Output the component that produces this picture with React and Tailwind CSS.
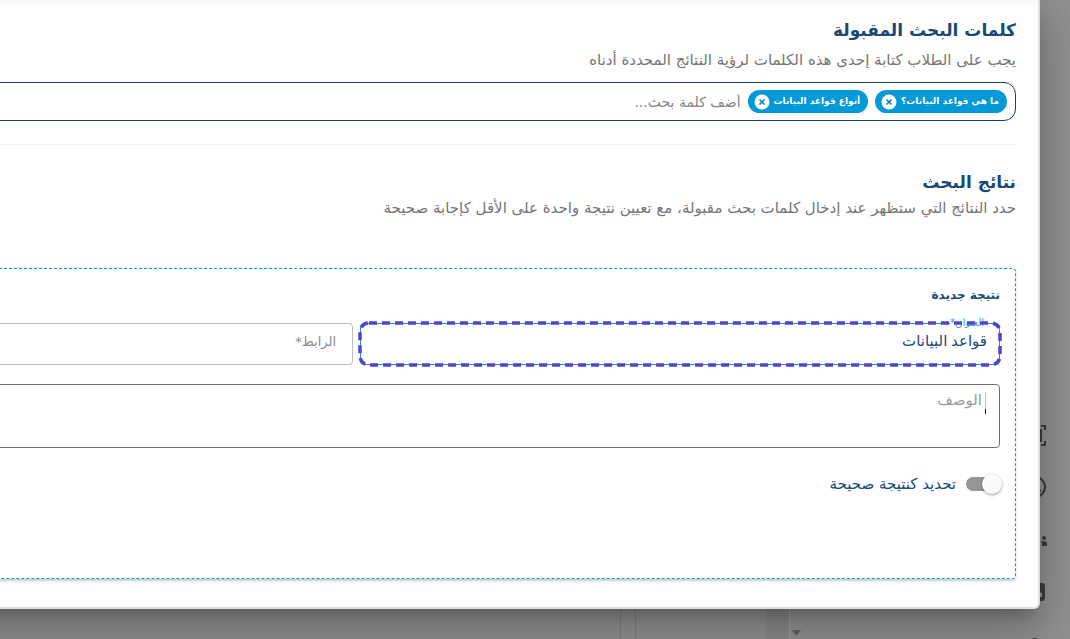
import React, { useState } from "react";

const KEYWORDS = ["ما هي قواعد البيانات؟", "أنواع قواعد البيانات"];

const ScanIcon = () => (
  <svg className="w-6 h-6 shrink-0" viewBox="0 0 24 24" fill="none" stroke="currentColor" strokeWidth="2">
    <path d="M2 7V3h5M18 3h4v4M22 18v4h-4M7 22H2v-4" />
    <rect x="5" y="6" width="14" height="13" rx="1" fill="currentColor" stroke="none" />
  </svg>
);

const CircleIcon = () => (
  <svg className="w-6 h-6 shrink-0" viewBox="0 0 24 24" fill="none" stroke="currentColor" strokeWidth="2">
    <circle cx="12" cy="12" r="10" />
    <path d="M12 6v7l6 3" />
  </svg>
);

const PeopleIcon = () => (
  <svg className="w-6 h-6 shrink-0" viewBox="0 0 24 24" fill="currentColor">
    <circle cx="12" cy="9" r="3" />
    <circle cx="4" cy="11" r="2" />
    <circle cx="21" cy="11" r="2" />
    <path d="M7 19v-2c0-2 2-4 5-4s5 2 5 4v2zM0 19v-2c0-1 2-3 5-3l1 5zM19 19v-3l-1-2c4 0 7 1 7 3v2z" />
  </svg>
);

const ImageIcon = () => (
  <svg className="w-6 h-6 shrink-0" viewBox="0 0 24 24" fill="currentColor" fillRule="evenodd">
    <path d="M4 4h16l2 2v14l-2 2H4l-2-2V6zM7 18h12v-4l-3-1-3 4-2-2z" />
  </svg>
);

const PersonIcon = () => (
  <svg className="w-6 h-6 shrink-0" viewBox="0 0 24 24" fill="currentColor">
    <circle cx="12" cy="11" r="4" />
    <path d="M4 23c0-4 4-6 8-6s8 2 8 6z" />
  </svg>
);

const Chip = ({ text, onRemove }) => (
  <span className="flex items-center gap-1 pl-1.5 pr-2 text-white rounded-full h-[23px] bg-[#0299d8]">
    <span className="text-[9px] font-bold whitespace-nowrap">{text}</span>
    <button type="button" aria-label="حذف" onClick={onRemove}>
      <svg className="w-4 h-4" viewBox="0 0 16 16">
        <circle cx="8" cy="8" r="7.5" fill="white" />
        <path d="M5.5 5.5l5 5M10.5 5.5l-5 5" stroke="#0b83b8" strokeWidth="1.6" />
      </svg>
    </button>
  </span>
);

const Backdrop = () => (
  <div className="flex min-h-screen bg-[#919191] text-[#3d3d3d]">
    <aside className="flex flex-col items-center shrink-0 h-screen overflow-hidden w-[70px] gap-7 pt-[423px]">
      <ScanIcon />
      <CircleIcon />
      <PeopleIcon />
      <ImageIcon />
      <PersonIcon />
    </aside>
    <div className="flex items-end justify-end pb-[3px] pl-0.5 border-l border-[#9c9c9c] w-[211px]">
      <svg className="w-[9px] h-[6px]" viewBox="0 0 9 6">
        <path d="M0 0h9L4.5 6z" fill="#606060" />
      </svg>
    </div>
    <div className="w-[23px] bg-[#898989]" />
    <div className="border-l border-[#808080] w-[131px]" />
    <div className="border-l border-[#808080] w-[15px]" />
  </div>
);

const App = () => {
  const [keywords, setKeywords] = useState(KEYWORDS);
  const [title, setTitle] = useState("قواعد البيانات");
  const [correct, setCorrect] = useState(false);

  return (
    <div
      dir="rtl"
      className="relative h-screen overflow-hidden font-['DejaVu_Sans',sans-serif] text-[#174a78]"
    >
      <Backdrop />
      <main
        role="dialog"
        className="absolute top-0 -left-16 right-[30px] bg-white border-r-2 border-b-2 border-[#dedede] rounded-br-md pb-7 shadow-[0_11px_15px_-7px_rgba(0,0,0,0.2),0_24px_38px_3px_rgba(0,0,0,0.14),0_9px_46px_8px_rgba(0,0,0,0.12)]"
      >
        <div className="h-1 bg-[#fafafa]" />
        <section className="pt-3 pr-[22px] pl-6">
          <h2 className="text-[17px] font-bold leading-7">كلمات البحث المقبولة</h2>
          <p className="mt-1 text-[15px] leading-6 text-[#757575]">
            يجب على الطلاب كتابة إحدى هذه الكلمات لرؤية النتائج المحددة أدناه
          </p>
          <div className="flex items-center gap-[7px] mt-2.5 h-[39px] px-2 border border-[#1d405e] rounded-xl">
            {keywords.map((word) => (
              <Chip
                key={word}
                text={word}
                onRemove={() => setKeywords(keywords.filter((k) => k !== word))}
              />
            ))}
            <input
              type="text"
              aria-label="أضف كلمة بحث"
              placeholder="أضف كلمة بحث..."
              className="flex-1 min-w-0 text-sm outline-none placeholder:text-[#858585]"
            />
          </div>
          <hr className="mt-[23px] border-[#f3f3f3]" />
        </section>

        <section className="pt-[23px] pr-[22px] pl-6">
          <h2 className="text-[17px] font-bold leading-7">نتائج البحث</h2>
          <p className="text-[15px] leading-6 text-[#757575]">
            حدد النتائج التي ستظهر عند إدخال كلمات بحث مقبولة، مع تعيين نتيجة واحدة على الأقل كإجابة صحيحة
          </p>

          <div className="mt-12 h-[311px] pt-3.5 px-[15px] border border-dashed border-[#0d9bb5] rounded shadow-[0_2px_2px_rgba(0,0,0,0.2)]">
            <h3 className="text-xs font-bold leading-6">نتيجة جديدة</h3>
            <div className="flex gap-[7px] mt-4">
              <div className="relative w-[640px] shrink-0">
                <input
                  id="title"
                  type="text"
                  value={title}
                  onChange={(e) => setTitle(e.target.value)}
                  className="block w-full h-[42px] px-3 pb-1.5 text-[15px] border border-[#2196b5] rounded outline-none font-['Liberation_Serif','DejaVu_Sans',serif]"
                />
                <label
                  htmlFor="title"
                  className="absolute right-4 -top-2 bg-white text-[10px] leading-4 text-[#2aa5dc]"
                >
                  العنوان*
                </label>
                <svg className="absolute -top-0.5 -left-0.5 w-[calc(100%+4px)] h-[calc(100%+4px)] pointer-events-none">
                  <rect
                    x="2"
                    y="2"
                    rx="9"
                    className="w-[calc(100%-4px)] h-[calc(100%-4px)]"
                    fill="none"
                    stroke="#5143ce"
                    strokeWidth="3.5"
                    strokeDasharray="8 5"
                  />
                </svg>
              </div>
              <input
                type="text"
                aria-label="الرابط"
                placeholder="الرابط*"
                className="flex-1 min-w-0 h-[42px] px-4 pb-1.5 text-[13px] border border-[#bdbdbd] rounded outline-none placeholder:text-[#8a8a8a]"
              />
            </div>

            <div className="relative mt-[19px]">
              <textarea
                id="description"
                className="block w-full h-16 p-4 text-[15px] border border-[#6f6f6f] rounded outline-none resize-none"
              />
              <span className="absolute top-2 right-3.5 w-px h-[22px] border-t-[17px] border-[#c4c4c4] bg-[#111111]" />
              <label
                htmlFor="description"
                className="absolute top-1 right-[18px] text-[15px] leading-6 text-[#9a9a9a]"
              >
                الوصف
              </label>
            </div>

            <label className="flex items-center w-fit gap-2.5 mt-6 text-[15px] leading-6 cursor-pointer">
              <span className="relative flex items-center w-[34px] h-6">
                <input
                  type="checkbox"
                  role="switch"
                  checked={correct}
                  onChange={(e) => setCorrect(e.target.checked)}
                  className="w-full h-3.5 rounded-full appearance-none peer bg-[#969696] checked:bg-[#7cc4e4]"
                />
                <span className="absolute -right-0.5 w-5 h-5 bg-[#fafafa] rounded-full shadow-[0_1px_3px_rgba(0,0,0,0.4)] pointer-events-none peer-checked:right-4" />
              </span>
              تحديد كنتيجة صحيحة
            </label>
          </div>
        </section>
      </main>
    </div>
  );
};

export default App;
